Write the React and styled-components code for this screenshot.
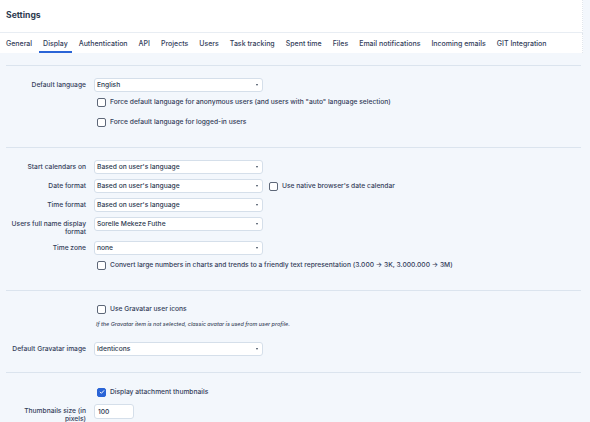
import styled, { createGlobalStyle } from "styled-components"

const Global = createGlobalStyle`
    html, body {
        margin: 0;
        padding: 0;
        background: #f3f7fc;
        font-family: Inter, "Noto Sans", sans-serif;
        color: #33405a;
        -webkit-font-smoothing: antialiased;
    }
    * { box-sizing: border-box; }
`;

const Page = styled.div`
    width: 590px;
    height: 422px;
    overflow: hidden;
`;

const Header = styled.div`
    height: 33px;
    width: 583px;
    background: #fff;
    border-bottom: 1px solid #e8edf3;
    border-right: 1px dotted #e1e6ec;
    display: flex;
    align-items: center;
    padding: 0 6px 2px;
`;

const Title = styled.h1`
    margin: 0;
    font-size: 8.6px;
    font-weight: 700;
    color: #2e3b51;
`;

const TabBar = styled.div`
    height: 20px;
    width: 583px;
    background: #fff;
    border-right: 1px dotted #e1e6ec;
    display: flex;
    gap: 3px;
    padding-left: 2px;
`;

const Tab = styled.div`
    padding: 2px 4px 0;
    display: flex;
    align-items: center;
    font-size: 7px;
    font-weight: 500;
    color: #33405a;
    white-space: nowrap;
    border-bottom: 2px solid ${p => (p.$active ? "#2a64d6" : "transparent")};
`;

const Content = styled.div`
    padding: 12px 9px 0 6px;
`;

const Section = styled.div`
    border-top: 1px solid #dbe4ee;
    padding: ${p => p.$pt}px 0 ${p => p.$pb || 15}px;
    display: flex;
    flex-direction: column;
`;

const FieldRow = styled.div`
    display: grid;
    grid-template-columns: 80px 1fr;
    column-gap: 8px;
    align-items: start;
    margin-top: ${p => p.$mt || 0}px;
`;

const Label = styled.div`
    text-align: right;
    font-size: 6.7px;
    font-weight: 500;
    line-height: 8px;
    padding-top: 3px;
    color: #33405a;
`;

const Field = styled.div`
    display: flex;
    align-items: center;
    gap: 6px;
`;

const Select = styled.div`
    width: 169px;
    height: 14px;
    background: #fff;
    border: 1px solid #d5dfea;
    border-radius: 3px;
    display: flex;
    align-items: center;
    justify-content: space-between;
    padding: 0 4px 0 2px;
    font-size: 6.7px;
    font-weight: 500;
    color: #2e3b51;

    &::after {
        content: "";
        border-left: 1.6px solid transparent;
        border-right: 1.6px solid transparent;
        border-top: 2px solid #3b475a;
    }
`;

const Input = styled.div`
    width: 40px;
    height: 15px;
    background: #fff;
    border: 1px solid #d5dfea;
    border-radius: 3px;
    display: flex;
    align-items: center;
    padding-left: 3px;
    font-size: 6.7px;
    font-weight: 500;
    color: #2e3b51;
`;

const CheckRow = styled.label`
    display: flex;
    align-items: center;
    gap: 4px;
    height: 14px;
    margin: ${p => (p.$inline ? "0" : "3px 0 3px 91px")};
    font-size: 6.7px;
    font-weight: 500;
    color: #33405a;
    white-space: nowrap;
`;

const Box = styled.span`
    width: 9px;
    height: 9px;
    border-radius: 2px;
    border: 1px solid ${p => (p.$checked ? "#2a64d6" : "#5d6778")};
    background: ${p => (p.$checked ? "#2a64d6" : "#fff")};
    display: flex;
    align-items: center;
    justify-content: center;
    flex: none;
`;

const Hint = styled.div`
    margin: 1px 0 0 90px;
    font-size: 5.4px;
    line-height: 9px;
    font-style: italic;
    font-weight: 500;
    color: #3d4a60;
`;

function Check({ checked, inline, children }) {
    return (
        <CheckRow $inline={inline}>
            <Box $checked={checked}>
                {checked && (
                    <svg width="6" height="6" viewBox="0 0 10 10">
                        <path d="M2 5.2l2 2 4-4.4" fill="none" stroke="#fff" strokeWidth="1.6" strokeLinecap="round" strokeLinejoin="round" />
                    </svg>
                )}
            </Box>
            {children}
        </CheckRow>
    );
}

const tabs = [
    "General", "Display", "Authentication", "API", "Projects", "Users",
    "Task tracking", "Spent time", "Files", "Email notifications",
    "Incoming emails", "GIT Integration",
];

export default function App() {
    return (
        <Page>
            <Global />
            <Header>
                <Title>Settings</Title>
            </Header>
            <TabBar>
                {tabs.map(t => (
                    <Tab key={t} $active={t === "Display"}>{t}</Tab>
                ))}
            </TabBar>
            <Content>
                <Section $pt={12}>
                    <FieldRow>
                        <Label>Default language</Label>
                        <Field><Select>English</Select></Field>
                    </FieldRow>
                    <Check>Force default language for anonymous users (and users with "auto" language selection)</Check>
                    <Check>Force default language for logged-in users</Check>
                </Section>
                <Section $pt={12}>
                    <FieldRow>
                        <Label>Start calendars on</Label>
                        <Field><Select>Based on user's language</Select></Field>
                    </FieldRow>
                    <FieldRow $mt={5}>
                        <Label>Date format</Label>
                        <Field>
                            <Select>Based on user's language</Select>
                            <Check inline>Use native browser's date calendar</Check>
                        </Field>
                    </FieldRow>
                    <FieldRow $mt={5}>
                        <Label>Time format</Label>
                        <Field><Select>Based on user's language</Select></Field>
                    </FieldRow>
                    <FieldRow $mt={5}>
                        <Label>Users full name display format</Label>
                        <Field><Select>Sorelle Mekeze Futhe</Select></Field>
                    </FieldRow>
                    <FieldRow $mt={5}>
                        <Label>Time zone</Label>
                        <Field><Select>none</Select></Field>
                    </FieldRow>
                    <Check>Convert large numbers in charts and trends to a friendly text representation (3.000 → 3K, 3.000.000 → 3M)</Check>
                </Section>
                <Section $pt={8} $pb={16}>
                    <Check>Use Gravatar user icons</Check>
                    <Hint>If the Gravatar item is not selected, classic avatar is used from user profile.</Hint>
                    <FieldRow $mt={13}>
                        <Label>Default Gravatar image</Label>
                        <Field><Select>Identicons</Select></Field>
                    </FieldRow>
                </Section>
                <Section $pt={9}>
                    <Check checked>Display attachment thumbnails</Check>
                    <FieldRow $mt={2}>
                        <Label>Thumbnails size (in pixels)</Label>
                        <Field><Input>100</Input></Field>
                    </FieldRow>
                </Section>
            </Content>
        </Page>
    );
}
